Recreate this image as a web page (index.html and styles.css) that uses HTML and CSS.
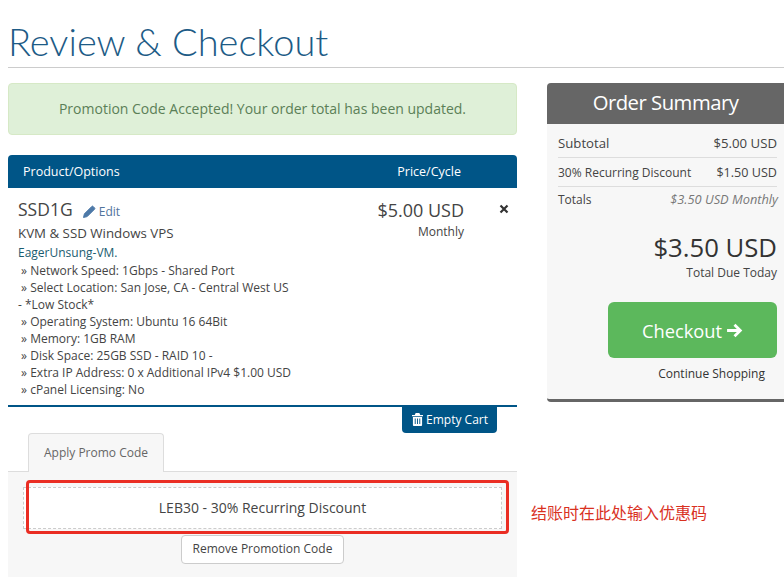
FILE: index.html
```html
<!DOCTYPE html>
<html lang="en">
<head>
    <meta charset="UTF-8">
    <meta name="viewport" content="width=device-width, initial-scale=1.0">
    <title>Review &amp; Checkout</title>
    <link rel="stylesheet" href="styles.css">
</head>
<body>
    <div class="page">
        <h1 class="page-title">Review &amp; Checkout</h1>
        <div class="columns">
            <div class="main">
                <div class="alert">Promotion Code Accepted! Your order total has been updated.</div>
                <div class="cart-head">
                    <span>Product/Options</span>
                    <span class="cart-head-price">Price/Cycle</span>
                </div>
                <div class="cart-item">
                    <div class="item-info">
                        <div class="item-title">
                            <span class="item-name">SSD1G</span>
                            <a class="item-edit" href="#">
                                <svg class="icon-pencil" viewBox="0 0 14 14"><path d="M0.500 13.500l1-4 8-8a1 1 0 0 1 1.400 0l1.600 1.600a1 1 0 0 1 0 1.400l-8 8zM2.600 9.800l1.600 1.600"/></svg>
                                Edit
                            </a>
                        </div>
                        <div class="item-group">KVM &amp; SSD Windows VPS</div>
                        <div class="item-host">EagerUnsung-VM.</div>
                        <div class="item-opts">
                            <div>&nbsp;» Network Speed: 1Gbps - Shared Port</div>
                            <div>&nbsp;» Select Location: San Jose, CA - Central West US - *Low Stock*</div>
                            <div>&nbsp;» Operating System: Ubuntu 16 64Bit</div>
                            <div>&nbsp;» Memory: 1GB RAM</div>
                            <div>&nbsp;» Disk Space: 25GB SSD - RAID 10 -</div>
                            <div>&nbsp;» Extra IP Address: 0 x Additional IPv4 $1.00 USD</div>
                            <div>&nbsp;» cPanel Licensing: No</div>
                        </div>
                    </div>
                    <div class="item-price">
                        <div class="item-amount">$5.00 USD</div>
                        <div>Monthly</div>
                    </div>
                    <svg class="icon-remove" viewBox="0 0 10 10"><path d="M1.500 1.500l7 7M8.500 1.500l-7 7"/></svg>
                </div>
                <div class="cart-actions">
                    <a class="btn-empty" href="#">
                        <svg class="icon-trash" viewBox="0 0 12 14"><path d="M4 0h4l1 2h3v1.400H0V2h3zM1 4.200h10V13a1 1 0 0 1-1 1H2a1 1 0 0 1-1-1zM3 6v6h1V6zM5.500 6v6h1V6zM8 6v6h1V6z" fill-rule="evenodd"/></svg>
                        Empty Cart
                    </a>
                </div>
                <div class="tabs">
                    <div class="tab">Apply Promo Code</div>
                </div>
                <div class="tab-panel">
                    <div class="promo-box">LEB30 - 30% Recurring Discount</div>
                    <a class="btn-remove" href="#">Remove Promotion Code</a>
                    <div class="promo-mark"></div>
                    <div class="promo-note">结账时在此处输入优惠码</div>
                </div>
            </div>
            <div class="summary">
                <div class="summary-head">Order Summary</div>
                <div class="summary-body">
                    <div class="sum-row"><span class="sum-big">Subtotal</span><span class="sum-big">$5.00 USD</span></div>
                    <div class="sum-row"><span>30% Recurring Discount</span><span class="sum-mid">$1.50 USD</span></div>
                    <div class="sum-row sum-last"><span>Totals</span><em>$3.50 USD Monthly</em></div>
                    <div class="sum-total">$3.50 USD</div>
                    <div class="sum-due">Total Due Today</div>
                    <a class="btn-checkout" href="#">
                        Checkout
                        <svg class="icon-arrow" viewBox="0 0 16 14"><path d="M1 7h12M8 1.500L13.500 7 8 12.500"/></svg>
                    </a>
                    <a class="continue" href="#">Continue Shopping</a>
                </div>
            </div>
        </div>
    </div>
</body>
</html>
```

FILE: styles.css
```css
html, body {
    margin: 0;
    height: 100%;
    overflow: hidden;
    background-color: #ffffff;
}
body {
    font-family: "Open Sans", "Noto Sans CJK SC", sans-serif;
    font-size: 12px;
    color: #444444;
}
a {
    text-decoration: none;
}
.page {
    padding-left: 8px;
}
.page-title {
    margin: 0 0 15px;
    height: 67px;
    border-bottom: 1px solid #cccccc;
    font-family: Lato, sans-serif;
    font-size: 38px;
    font-weight: 300;
    line-height: 82px;
    color: #1d5b86;
}
.columns {
    display: grid;
    grid-template-columns: 509px 237px;
    column-gap: 30px;
    align-items: start;
}
.alert {
    height: 50px;
    line-height: 50px;
    margin-bottom: 20px;
    border: 1px solid #d6e9c6;
    border-radius: 4px;
    background-color: #dff0d8;
    color: #5b7f57;
    font-size: 14px;
    text-align: center;
}
.cart-head {
    display: flex;
    justify-content: space-between;
    height: 33px;
    line-height: 33px;
    padding: 0 56px 0 15px;
    border-radius: 4px 4px 0 0;
    background-color: #005587;
    color: #ffffff;
    font-size: 12.500px;
    font-weight: 500;
}
.cart-item {
    display: flex;
    position: relative;
    height: 217px;
    padding: 0 53px 0 10px;
    border-bottom: 2px solid #005587;
}
.item-info {
    flex: 0 0 275px;
}
.item-title {
    display: flex;
    align-items: baseline;
    padding-top: 9px;
    line-height: 25px;
}
.item-name {
    font-size: 17.500px;
    margin-right: 10px;
}
.item-edit {
    color: #51749c;
    font-size: 12px;
}
.icon-pencil {
    width: 13px;
    height: 13px;
    vertical-align: -2px;
    fill: #4d79a8;
    stroke: #4d79a8;
    stroke-width: 1;
}
.item-group {
    font-size: 13.300px;
    line-height: 19px;
}
.item-host {
    color: #1a5c70;
    line-height: 19px;
}
.item-opts {
    line-height: 17px;
}
.item-price {
    flex: 1;
    text-align: right;
    padding-top: 9px;
}
.item-amount {
    font-size: 18px;
    line-height: 26px;
}
.icon-remove {
    position: absolute;
    right: 8px;
    top: 16px;
    width: 10px;
    height: 10px;
    stroke: #333333;
    stroke-width: 2.200;
}
.cart-actions {
    display: flex;
    justify-content: flex-end;
    padding-right: 20px;
    height: 26px;
}
.btn-empty {
    display: block;
    height: 26px;
    line-height: 26px;
    padding: 0 9px 0 10px;
    border-radius: 0 0 4px 4px;
    background-color: #005587;
    color: #ffffff;
    font-size: 12px;
}
.icon-trash {
    width: 11px;
    height: 13px;
    vertical-align: -2px;
    fill: #ffffff;
}
.tabs {
    height: 38px;
    padding-left: 20px;
    border-bottom: 1px solid #dddddd;
}
.tab {
    display: inline-block;
    box-sizing: border-box;
    width: 136px;
    height: 39px;
    line-height: 38px;
    border: 1px solid #dddddd;
    border-bottom: none;
    border-radius: 4px 4px 0 0;
    background-color: #f7f7f7;
    text-align: center;
    color: #666666;
}
.tab-panel {
    position: relative;
    height: 105px;
    padding: 15px 15px 0;
    background-color: #f7f7f7;
    text-align: center;
}
.promo-box {
    box-sizing: border-box;
    height: 42px;
    line-height: 39px;
    border: 1px dashed #cccccc;
    background-color: #ffffff;
    font-size: 14px;
}
.btn-remove {
    display: inline-block;
    box-sizing: border-box;
    width: 163px;
    height: 29px;
    line-height: 25px;
    margin-top: 6px;
    border: 1px solid #cccccc;
    border-radius: 4px;
    background-color: #ffffff;
    color: #444444;
}
.promo-mark {
    position: absolute;
    left: 18px;
    top: 8px;
    width: 477px;
    height: 48px;
    border: 3px solid #ea2d23;
    border-radius: 4px;
}
.promo-note {
    position: absolute;
    left: 523px;
    top: 28px;
    white-space: nowrap;
    font-size: 16px;
    color: #d9311f;
}
.summary {
    border-bottom: 3px solid #666666;
    border-radius: 4px 0 0 4px;
    background-color: #f7f7f7;
}
.summary-head {
    height: 41px;
    line-height: 39px;
    border-radius: 4px 0 0 0;
    background-color: #666666;
    color: #ffffff;
    font-size: 20.300px;
    letter-spacing: -0.500px;
    text-align: center;
}
.summary-body {
    padding: 5px 7px 14px 11px;
}
.sum-row {
    display: flex;
    justify-content: space-between;
    align-items: center;
    height: 28px;
    border-bottom: 1px solid #dddddd;
}
.sum-last {
    border-bottom: none;
    height: 24px;
}
.sum-row em {
    color: #777777;
    font-size: 12.800px;
    margin-right: -1px;
}
.sum-big {
    font-size: 13.200px;
}
.sum-mid {
    font-size: 12.600px;
}
.sum-total {
    margin-top: 20px;
    font-size: 25.700px;
    line-height: 33px;
    text-align: right;
    color: #333333;
}
.sum-due {
    line-height: 18px;
    text-align: right;
}
.btn-checkout {
    display: flex;
    align-items: center;
    justify-content: center;
    gap: 4px;
    width: 169px;
    height: 56px;
    margin: 20px 0 0 auto;
    border-radius: 6px;
    background-color: #5cb85c;
    color: #ffffff;
    font-size: 18.300px;
}
.icon-arrow {
    width: 17px;
    height: 15px;
    fill: none;
    stroke: #ffffff;
    stroke-width: 2.600;
}
.continue {
    display: block;
    width: 169px;
    margin: 7px 0 0 auto;
    padding-bottom: 2px;
    text-align: right;
    padding-right: 12px;
    box-sizing: border-box;
    color: #333333;
    line-height: 18px;
}
```
